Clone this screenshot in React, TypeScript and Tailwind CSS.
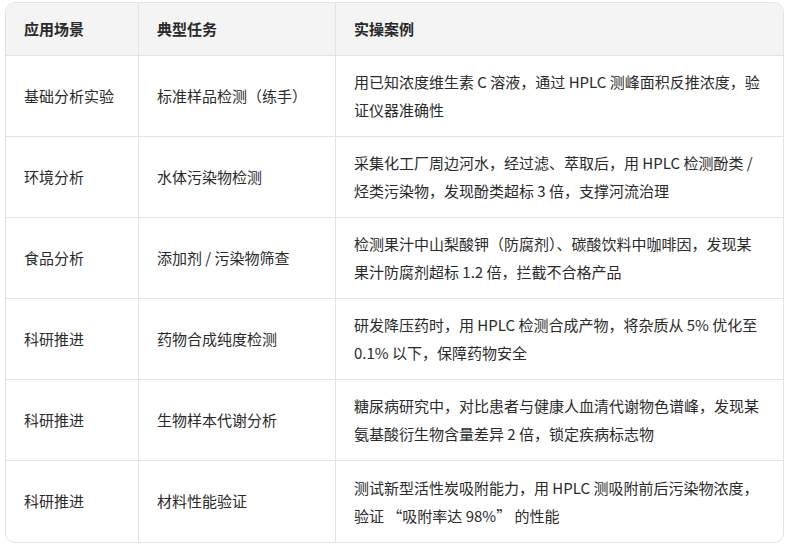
export default function App() {
  const rows = [
    ["基础分析实验", "标准样品检测（练手）", "用已知浓度维生素 C 溶液，通过 HPLC 测峰面积反推浓度，验证仪器准确性"],
    ["环境分析", "水体污染物检测", "采集化工厂周边河水，经过滤、萃取后，用 HPLC 检测酚类 / 烃类污染物，发现酚类超标 3 倍，支撑河流治理"],
    ["食品分析", "添加剂 / 污染物筛查", "检测果汁中山梨酸钾（防腐剂）、碳酸饮料中咖啡因，发现某果汁防腐剂超标 1.2 倍，拦截不合格产品"],
    ["科研推进", "药物合成纯度检测", "研发降压药时，用 HPLC 检测合成产物，将杂质从 5% 优化至 0.1% 以下，保障药物安全"],
    ["科研推进", "生物样本代谢分析", "糖尿病研究中，对比患者与健康人血清代谢物色谱峰，发现某氨基酸衍生物含量差异 2 倍，锁定疾病标志物"],
    ["科研推进", "材料性能验证", "测试新型活性炭吸附能力，用 HPLC 测吸附前后污染物浓度，验证 “吸附率达 98%” 的性能"],
  ];
  return (
    <div className="w-[788px] h-[544px] bg-white pl-[5px] pr-[4px] pt-[2px]" style={{ fontFamily: '"Noto Sans CJK SC", "Noto Sans", sans-serif' }}>
      <div className="border border-[#e3e3e3] rounded-[10px] overflow-hidden text-[15px] text-[#2a2a2a]">
        <div className="grid grid-cols-[133px_197px_1fr] bg-[#f4f4f4] h-[53px] items-center font-bold border-b border-[#e3e3e3]">
          <div className="px-[18px] h-full flex items-center border-r border-[#e3e3e3]">应用场景</div>
          <div className="px-[18px] h-full flex items-center border-r border-[#e3e3e3]">典型任务</div>
          <div className="px-[18px] h-full flex items-center">实操案例</div>
        </div>
        {rows.map((r, i) => (
          <div key={i} className={`grid grid-cols-[133px_197px_1fr] h-[81px] ${i < rows.length - 1 ? "border-b border-[#e3e3e3]" : ""}`}>
            <div className="px-[18px] flex items-center border-r border-[#e3e3e3]">{r[0]}</div>
            <div className="px-[18px] flex items-center border-r border-[#e3e3e3]">{r[1]}</div>
            <div className="pl-[18px] flex items-center leading-[28px]">
              <div className="max-w-[408px]">{r[2]}</div>
            </div>
          </div>
        ))}
      </div>
    </div>
  );
}
